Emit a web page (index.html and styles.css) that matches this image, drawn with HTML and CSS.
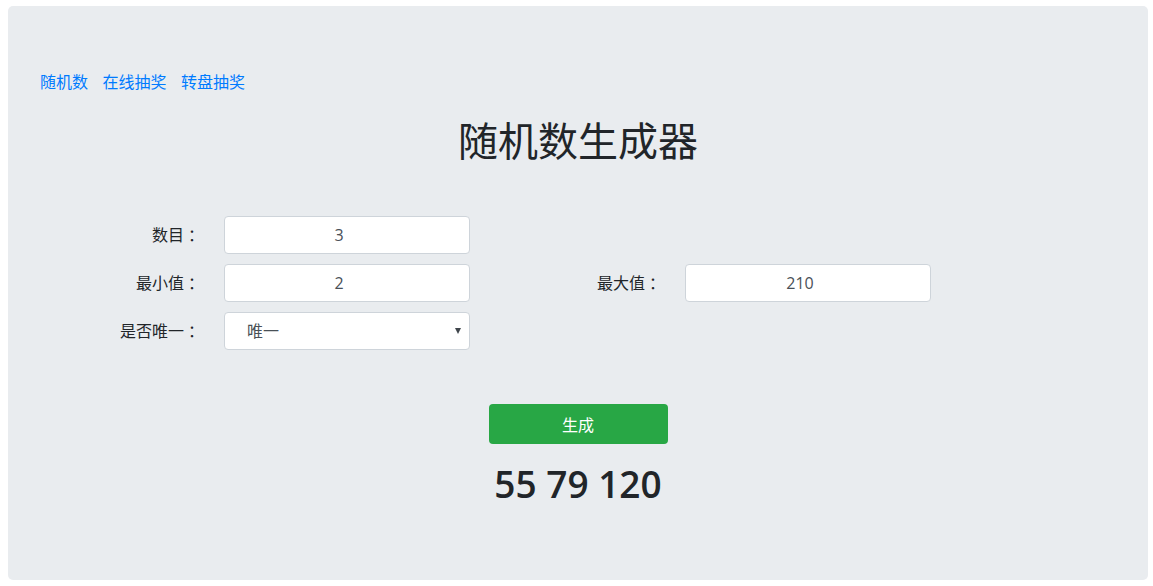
FILE: index.html
```html
<!DOCTYPE html>
<html lang="zh-CN">
<head>
<meta charset="utf-8">
<title>随机数生成器</title>
<link rel="stylesheet" href="styles.css">
</head>
<body>
<div class="container">
  <div class="jumbotron">
    <nav class="links">
      <a href="#">随机数</a>
      <a href="#">在线抽奖</a>
      <a href="#">转盘抽奖</a>
    </nav>
    <h1 class="title">随机数生成器</h1>
    <form class="form">
      <div class="form-row">
        <label class="lbl">数目<span class="colon">：</span></label>
        <input class="field" type="text" value="3">
      </div>
      <div class="form-row">
        <label class="lbl">最小值<span class="colon">：</span></label>
        <input class="field" type="text" value="2">
        <label class="lbl lbl-second">最大值<span class="colon">：</span></label>
        <input class="field" type="text" value="210">
      </div>
      <div class="form-row">
        <label class="lbl">是否唯一<span class="colon">：</span></label>
        <div class="select-wrap">
          <select class="select">
            <option>唯一</option>
            <option>不唯一</option>
          </select>
        </div>
      </div>
    </form>
    <div class="actions">
      <button class="btn" type="button">生成</button>
    </div>
    <div class="result">55 79 120</div>
  </div>
</div>
</body>
</html>
```
FILE: styles.css
```css
* { box-sizing: border-box; }

html, body {
  margin: 0;
  padding: 0;
  background: #ffffff;
}

body {
  padding-top: 6px;
  font-family: "Open Sans", "Noto Sans CJK SC", sans-serif;
  font-size: 16px;
  line-height: 1.5;
  color: #212529;
}

.container {
  width: 1140px;
  margin-left: 8px;
}

.jumbotron {
  background: #e9ecef;
  border-radius: 5px;
  padding: 64px 32px 64px 32px;
}

.links {
  display: flex;
  gap: 14.5px;
  height: 24px;
}

.links a {
  color: #007bff;
  text-decoration: none;
  font-size: 16px;
  line-height: 24px;
}

.title {
  margin: 23px 0 0 0;
  font-size: 40px;
  line-height: 48px;
  font-weight: 400;
  text-align: center;
  color: #212529;
}

.form {
  margin-top: 51px;
  display: flex;
  flex-direction: column;
  gap: 10px;
}

.form-row {
  display: flex;
  align-items: center;
  height: 38px;
}

.lbl {
  width: 164px;
  margin-right: 20px;
  text-align: right;
  font-size: 16px;
  color: #212529;
}

.lbl-second {
  margin-left: 31px;
}

.colon {
  padding-left: 4px;
}

.field,
.select {
  width: 246px;
  height: 38px;
  border: 1px solid #ced4da;
  border-radius: 4px;
  background: #ffffff;
  font-family: "Open Sans", "Noto Sans CJK SC", sans-serif;
  font-size: 16px;
  color: #495057;
  outline: none;
}

.field {
  text-align: center;
  padding: 0 28px 0 12px;
}

.select-wrap {
  position: relative;
  width: 246px;
  height: 38px;
}

.select {
  appearance: none;
  -webkit-appearance: none;
  padding: 0 24px 0 22px;
}

.select-wrap::after {
  content: "";
  position: absolute;
  right: 9px;
  top: 16px;
  border-left: 3.5px solid transparent;
  border-right: 3.5px solid transparent;
  border-top: 6px solid #3f454b;
  pointer-events: none;
}

.actions {
  margin-top: 54px;
  display: flex;
  justify-content: center;
}

.btn {
  width: 179px;
  height: 40px;
  border: 0;
  border-radius: 4px;
  background: #28a745;
  color: #ffffff;
  font-family: "Open Sans", "Noto Sans CJK SC", sans-serif;
  font-size: 16px;
  cursor: pointer;
}

.result {
  margin-top: 17px;
  margin-bottom: 9px;
  text-align: center;
  font-size: 37px;
  line-height: 46px;
  font-weight: 600;
  color: #212529;
}
```
